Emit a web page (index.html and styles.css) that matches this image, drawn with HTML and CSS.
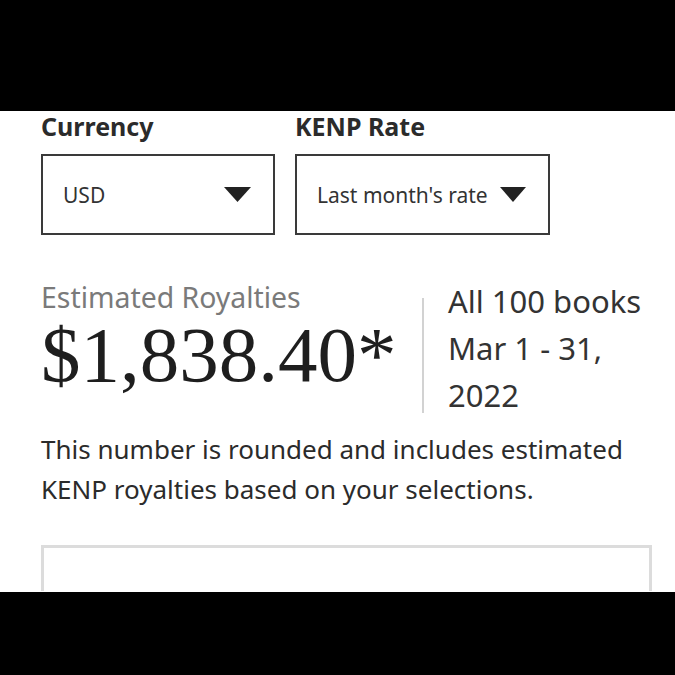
FILE: index.html
```html
<!DOCTYPE html>
<html>
<head>
<meta charset="utf-8">
<link rel="stylesheet" href="styles.css">
</head>
<body>
<div class="bar-top"></div>
<main class="panel">
  <div class="selects">
    <div class="field">
      <div class="label">Currency</div>
      <div class="select">
        <span class="value">USD</span>
        <svg class="caret" width="27" height="15" viewBox="0 0 27 15"><path d="M0 0 H27 L13.5 15 Z" fill="#222"/></svg>
      </div>
    </div>
    <div class="field">
      <div class="label">KENP Rate</div>
      <div class="select">
        <span class="value">Last month's rate</span>
        <svg class="caret" width="26" height="15" viewBox="0 0 26 15"><path d="M0 0 H26 L13 15 Z" fill="#222"/></svg>
      </div>
    </div>
  </div>
  <div class="summary">
    <div class="royalties">
      <div class="est-label">Estimated Royalties</div>
      <div class="amount">$1,838.40*</div>
    </div>
    <div class="divider"></div>
    <div class="meta">
      <div>All 100 books</div>
      <div>Mar 1 - 31,</div>
      <div>2022</div>
    </div>
  </div>
  <p class="note">This number is rounded and includes estimated KENP royalties based on your selections.</p>
  <div class="card"></div>
</main>
<div class="bar-bottom"></div>
</body>
</html>
```
FILE: styles.css
```css
html, body {
  margin: 0;
  padding: 0;
  background: #000;
}
body {
  width: 675px;
  height: 675px;
  overflow: hidden;
  display: flex;
  flex-direction: column;
  font-family: "Noto Sans", "Open Sans", sans-serif;
  color: #2b2b2b;
}
.bar-top {
  height: 111px;
  background: #000;
  flex: none;
}
.panel {
  height: 481px;
  flex: none;
  background: #fff;
  padding: 0 23px 0 41px;
  box-sizing: border-box;
}
.bar-bottom {
  flex: 1;
  background: #000;
}
.selects {
  display: grid;
  grid-template-columns: 234px 255px;
  column-gap: 20px;
}
.label {
  font-weight: 700;
  font-size: 25px;
  line-height: 32px;
  height: 43px;
  margin-top: -1px;
  margin-bottom: 1px;
  color: #2b2b2b;
}
.select {
  height: 81px;
  box-sizing: border-box;
  border: 2px solid #3a3a3a;
  display: flex;
  align-items: center;
  justify-content: space-between;
  padding: 0 22px 0 20px;
}
.value {
  font-size: 21px;
  color: #333;
}
.caret {
  display: block;
  flex: none;
}
.summary {
  display: flex;
  align-items: flex-start;
  margin-top: 46px;
}
.royalties {
  width: 381px;
  flex: none;
}
.est-label {
  font-size: 28.4px;
  color: #7a7a7a;
  line-height: 30px;
  margin-top: 1px;
}
.amount {
  font-family: "Liberation Serif", "DejaVu Serif", serif;
  font-size: 79px;
  line-height: 84px;
  margin-top: 1px;
  color: #1e1e1e;
}
.divider {
  flex: none;
  width: 2px;
  height: 115px;
  margin-top: 17px;
  background: #d2d2d2;
}
.meta {
  padding-left: 24px;
  font-size: 31px;
  line-height: 47px;
  color: #333;
  margin-top: -3px;
}
.note {
  margin: 10px 0 0;
  font-size: 26px;
  line-height: 40px;
  color: #2b2b2b;
}
.card {
  margin-top: 36px;
  height: 46px;
  border: 3px solid #dcdcdc;
  border-bottom: none;
  box-sizing: border-box;
}
```
